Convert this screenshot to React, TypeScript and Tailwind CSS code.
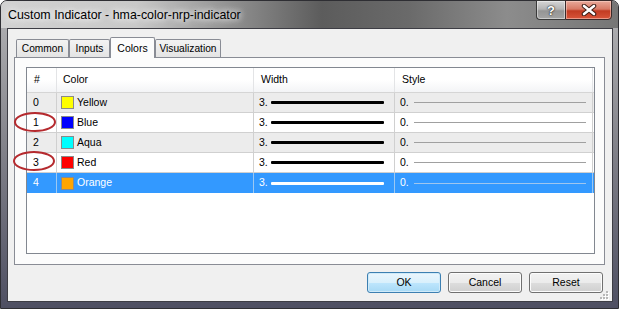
import React from "react";

const rows = [
  { n: "0", name: "Yellow", color: "#ffff00" },
  { n: "1", name: "Blue", color: "#0000ff" },
  { n: "2", name: "Aqua", color: "#00ffff" },
  { n: "3", name: "Red", color: "#ff0000" },
  { n: "4", name: "Orange", color: "#ffa500" },
];

function Tab({ label, w, active }: { label: string; w: string; active?: boolean }) {
  if (active) {
    return (
      <div
        className={`${w} relative z-10 -mb-px h-[21px] border border-b-0 border-[#898c95] bg-[#fcfcfc] flex items-start justify-center pt-[3px] text-[10.5px] text-black rounded-t-[2px]`}
      >
        {label}
      </div>
    );
  }
  return (
    <div
      className={`${w} h-[18px] border border-b-0 border-[#898c95] bg-[linear-gradient(to_bottom,#f3f3f3,#e4e4e4)] flex items-center justify-center pt-[1px] text-[10.2px] text-black rounded-t-[2px]`}
    >
      {label}
    </div>
  );
}

function Btn({ label, def }: { label: string; def?: boolean }) {
  return (
    <div
      className={
        def
          ? "w-[74px] h-[21px] rounded-[3px] border border-[#3c7fb1] bg-[linear-gradient(to_bottom,#eaf6fd_0%,#d9f0fc_50%,#bee6fd_51%,#a7d9f5_100%)] shadow-[inset_0_0_0_1px_#cfeaf9] flex items-center justify-center text-[10.5px] text-black"
          : "w-[74px] h-[21px] rounded-[3px] border border-[#707070] bg-[linear-gradient(to_bottom,#f2f2f2_0%,#ebebeb_50%,#dddddd_51%,#cfcfcf_100%)] shadow-[inset_0_0_0_1px_#fcfcfc] flex items-center justify-center text-[10.5px] text-black"
      }
    >
      {label}
    </div>
  );
}

export default function App() {
  return (
    <div className="relative w-[619px] h-[309px] bg-white overflow-hidden font-['Liberation_Sans',Arial,sans-serif]">
      <div className="w-[619px] h-[309px] rounded-t-[7px] border border-[#2e2e33] bg-[linear-gradient(to_bottom,#b4b4b6_0%,#85858c_45%,#4e4f62_100%)] flex flex-col">
        {/* title bar */}
        <div className="h-[27px] flex items-start rounded-t-[6px] bg-[linear-gradient(to_right,#d2d2d2_0%,#c8c8c8_22%,#8e8e8e_38%,#5c5c5c_52%,#6a6a6a_66%,#8c8c8c_82%,#767676_100%)]">
          <div className="pl-[7px] pt-[6px] text-[12.4px] leading-[16px] text-black [text-shadow:0_0_6px_#ffffff,0_0_10px_#ffffff]">
            Custom Indicator - hma-color-nrp-indicator
          </div>
          <div className="ml-auto mr-[6px] -mt-px flex">
            <div className="w-[29px] h-[20px] rounded-bl-[4px] border border-[#3a3a3a] border-r-0 bg-[linear-gradient(to_bottom,#d6d6d6_0%,#b4b4b4_45%,#959595_55%,#a4a4a4_100%)] shadow-[inset_0_0_0_1px_rgba(255,255,255,0.45)] flex items-center justify-center">
              <span className="text-white font-bold text-[13px] leading-none [text-shadow:0_0_2px_#222,0_0_1px_#000]">?</span>
            </div>
            <div className="w-[47px] h-[20px] rounded-br-[4px] border border-[#3a2a2a] bg-[linear-gradient(to_bottom,#e9a99a_0%,#d87a66_45%,#c23b22_55%,#d8553a_100%)] shadow-[inset_0_0_0_1px_rgba(255,220,210,0.5)] flex items-center justify-center">
              <svg width="16" height="12" viewBox="0 0 16 12">
                <path d="M3 2 L13 10 M13 2 L3 10" stroke="#3a1a12" strokeWidth="4.5" strokeLinecap="round" />
                <path d="M3 2 L13 10 M13 2 L3 10" stroke="#ffffff" strokeWidth="2.6" strokeLinecap="round" />
              </svg>
            </div>
          </div>
        </div>
        {/* body */}
        <div className="flex">
          <div className="w-[6px]" />
          <div className="relative w-[606px] h-[274px] border border-[#3d3d44] bg-[#f0f0f0] flex flex-col">
            <div className="mt-[8px] h-[20px] pl-[8px] flex items-end">
              <Tab label="Common" w="w-[53px]" />
              <Tab label="Inputs" w="w-[41px]" />
              <Tab label="Colors" w="w-[45px]" active />
              <Tab label="Visualization" w="w-[66px]" />
            </div>
            <div className="ml-[6px] w-[591px] h-[208px] border border-[#898c95] bg-[#fcfcfc] pl-[11px] pt-[9px]">
              <div className="w-[569px] h-[187px] border border-[#828790] bg-white text-[10.5px] text-black">
                {/* header */}
                <div className="flex h-[25px] border-b border-[#d5d5d5] bg-[linear-gradient(to_bottom,#ffffff_0%,#ffffff_50%,#f3f4f6_100%)]">
                  <div className="w-[30px] border-r border-[#e3e4e6] pl-[7px] flex items-center">#</div>
                  <div className="w-[197px] border-r border-[#e3e4e6] pl-[6px] flex items-center">Color</div>
                  <div className="w-[141px] border-r border-[#e3e4e6] pl-[7px] flex items-center">Width</div>
                  <div className="w-[198px] border-r border-[#e3e4e6] pl-[7px] flex items-center">Style</div>
                </div>
                {rows.map((r, i) => {
                  const sel = i === 4;
                  const bg = sel ? "bg-[#3399ff] text-white" : i % 2 === 0 ? "bg-[#ececec]" : "bg-white";
                  const div = sel ? "border-[#9cc8f2]" : "border-[#d0d0d0]";
                  return (
                    <div key={r.n} className={`flex h-[20px] ${sel ? "" : "border-b border-[#d0d0d0]"} ${bg}`}>
                      <div className={`w-[30px] border-r ${div} pl-[6px] flex items-center`}>{r.n}</div>
                      <div className={`w-[197px] border-r ${div} pl-[4px] flex items-center`}>
                        <div className="w-[13px] h-[13px] border border-[#8a8a8a]" style={{ backgroundColor: r.color }} />
                        <span className="ml-[3px]">{r.name}</span>
                      </div>
                      <div className={`w-[141px] border-r ${div} pl-[5px] flex items-center`}>
                        <span>3.</span>
                        <div className={`ml-[3px] w-[113px] h-[3px] rounded-[1px] ${sel ? "bg-white" : "bg-black"}`} />
                      </div>
                      <div className={`w-[198px] border-r ${div} pl-[5px] flex items-center`}>
                        <span>0.</span>
                        <div className={`ml-[5px] w-[172px] h-px ${sel ? "bg-[#9fc6ee]" : "bg-[#a0a0a0]"}`} />
                      </div>
                    </div>
                  );
                })}
              </div>
            </div>
            <div className="mt-[7px] pr-[9px] flex justify-end gap-[7px]">
              <Btn label="OK" def />
              <Btn label="Cancel" />
              <Btn label="Reset" />
            </div>
            <svg className="absolute right-[3px] bottom-[1px]" width="10" height="10" viewBox="0 0 10 10">
              {[
                [7, 1],
                [4, 4],
                [7, 4],
                [1, 7],
                [4, 7],
                [7, 7],
              ].map(([x, y], k) => (
                <g key={k}>
                  <rect x={x + 1} y={y + 1} width="2" height="2" fill="#ffffff" />
                  <rect x={x} y={y} width="2" height="2" fill="#b8b8b8" />
                </g>
              ))}
            </svg>
          </div>
        </div>
      </div>
      {/* red annotation ellipses */}
      <svg className="absolute left-0 top-0 pointer-events-none" width="619" height="309">
        <ellipse cx="35" cy="122" rx="20" ry="9" fill="none" stroke="#b52a2e" strokeWidth="2" />
        <ellipse cx="34" cy="161" rx="20" ry="9" fill="none" stroke="#b52a2e" strokeWidth="2" />
      </svg>
    </div>
  );
}
